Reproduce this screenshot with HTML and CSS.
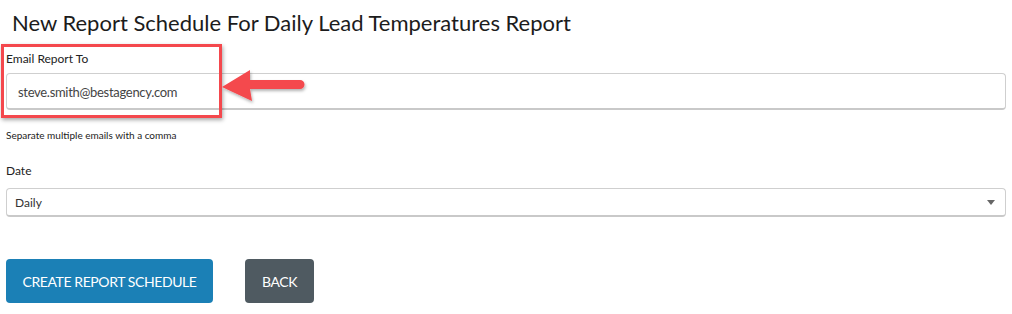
FILE: index.html
```html
<!DOCTYPE html>
<html>
<head>
<meta charset="utf-8">
<link rel="stylesheet" href="styles.css">
</head>
<body>
<div class="page">
  <h1 class="title">New Report Schedule For Daily Lead Temperatures Report</h1>
  <div class="field email-field">
    <label class="label">Email Report To</label>
    <div class="input">steve.smith@bestagency.com</div>
    <div class="hint">Separate multiple emails with a comma</div>
    <div class="highlight"></div>
    <svg class="arrow" width="90" height="40" viewBox="0 0 90 40">
      <defs>
        <filter id="sh" x="-20%" y="-20%" width="140%" height="160%">
          <feDropShadow dx="1" dy="2" stdDeviation="1.5" flood-color="#000" flood-opacity="0.3"/>
        </filter>
      </defs>
      <g filter="url(#sh)" fill="#f4484d">
        <path d="M2 19 L30 2 L30 12 L80 12 A4.5 4.5 0 0 1 80 21 L30 21 L32 33 Z"/>
      </g>
    </svg>
  </div>
  <div class="field date-field">
    <label class="label">Date</label>
    <div class="select">
      <span>Daily</span>
      <span class="caret"></span>
    </div>
  </div>
  <div class="actions">
    <button class="btn btn-primary">CREATE REPORT SCHEDULE</button>
    <button class="btn btn-dark">BACK</button>
  </div>
</div>
</body>
</html>
```

FILE: styles.css
```css
* { box-sizing: border-box; }
html, body { margin: 0; padding: 0; background: #fff; }
body {
  font-family: Lato, "Noto Sans", "DejaVu Sans", sans-serif;
  color: #222;
}
.page {
  padding: 0 6px;
  width: 1012px;
}
.title {
  margin: 0;
  padding: 9px 0 0 6px;
  font-size: 22px;
  font-weight: 400;
  line-height: 28px;
  color: #1c1c1c;
}
.field { position: relative; }
.email-field { margin-top: 14px; }
.label {
  display: block;
  font-size: 12px;
  line-height: 16px;
  color: #222;
}
.input {
  margin-top: 6px;
  height: 37px;
  border: 1px solid #cfcfcf;
  border-bottom: 2px solid #c9c9c9;
  border-radius: 4px;
  padding: 1px 11px 0;
  display: flex;
  align-items: center;
  font-size: 13px;
  letter-spacing: -0.3px;
  color: #444;
}
.hint {
  margin-top: 19px;
  font-size: 10px;
  line-height: 12px;
  color: #222;
}
.highlight {
  position: absolute;
  left: -5px;
  top: -7px;
  width: 221px;
  height: 74px;
  border: 3px solid #f4484d;
  box-shadow: 1px 2px 4px rgba(0,0,0,0.35);
}
.arrow {
  position: absolute;
  left: 214px;
  top: 17px;
}
.date-field { margin-top: 22px; }
.select {
  margin-top: 9px;
  height: 29px;
  border: 1px solid #cfcfcf;
  border-bottom: 2px solid #c9c9c9;
  border-radius: 4px;
  padding: 0 8px;
  display: flex;
  align-items: center;
  justify-content: space-between;
  font-size: 12px;
  color: #333;
}
.caret {
  width: 0;
  height: 0;
  border-left: 4px solid transparent;
  border-right: 4px solid transparent;
  border-top: 5px solid #666;
  margin-right: 2px;
}
.actions {
  display: flex;
  gap: 32px;
  margin-top: 42px;
}
.btn {
  height: 44px;
  border: 0;
  border-radius: 4px;
  color: #fff;
  font-family: Lato, "Noto Sans", sans-serif;
  font-size: 14px;
  letter-spacing: -0.4px;
  padding: 0;
  white-space: nowrap;
  cursor: pointer;
}
.btn-primary { background: #1b80b6; width: 207px; }
.btn-dark { background: #4f5a61; width: 69px; }
```
